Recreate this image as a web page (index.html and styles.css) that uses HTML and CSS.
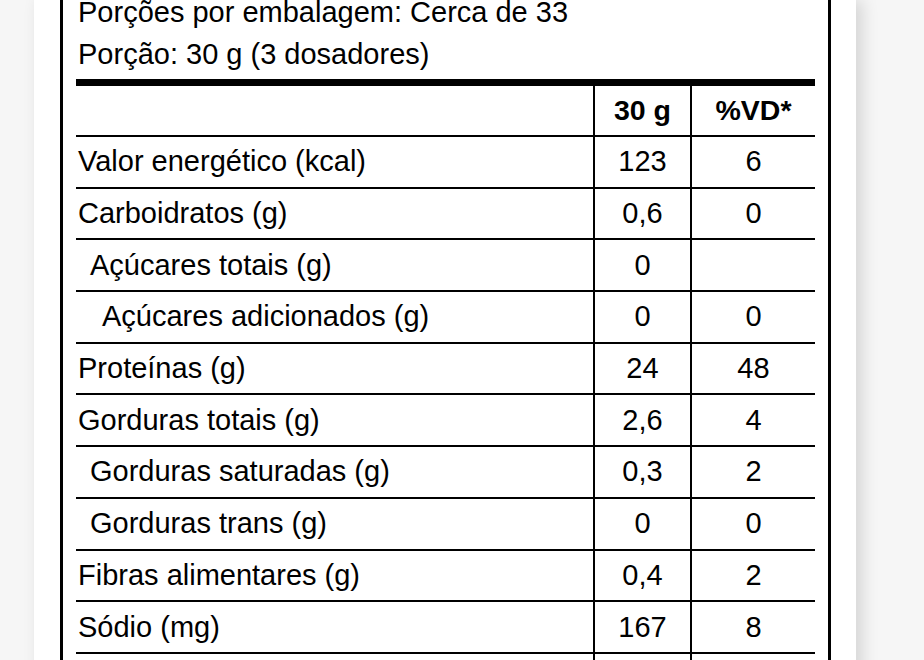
FILE: index.html
```html
<!DOCTYPE html>
<html lang="pt-BR">
<head>
<meta charset="utf-8">
<title>Informação Nutricional</title>
<link rel="stylesheet" href="styles.css">
</head>
<body>
<div class="page">
  <div class="label">
    <p class="info">Porções por embalagem: Cerca de 33</p>
    <p class="info">Porção: 30 g (3 dosadores)</p>
    <div class="thick-rule"></div>
    <table class="nutri">
      <thead>
        <tr>
          <th class="name"></th>
          <th class="val">30 g</th>
          <th class="vd">%VD*</th>
        </tr>
      </thead>
      <tbody>
        <tr><td class="name">Valor energético (kcal)</td><td class="val">123</td><td class="vd">6</td></tr>
        <tr><td class="name">Carboidratos (g)</td><td class="val">0,6</td><td class="vd">0</td></tr>
        <tr><td class="name sub">Açúcares totais (g)</td><td class="val">0</td><td class="vd"></td></tr>
        <tr><td class="name sub2">Açúcares adicionados (g)</td><td class="val">0</td><td class="vd">0</td></tr>
        <tr><td class="name">Proteínas (g)</td><td class="val">24</td><td class="vd">48</td></tr>
        <tr><td class="name">Gorduras totais (g)</td><td class="val">2,6</td><td class="vd">4</td></tr>
        <tr><td class="name sub">Gorduras saturadas (g)</td><td class="val">0,3</td><td class="vd">2</td></tr>
        <tr><td class="name sub">Gorduras trans (g)</td><td class="val">0</td><td class="vd">0</td></tr>
        <tr><td class="name">Fibras alimentares (g)</td><td class="val">0,4</td><td class="vd">2</td></tr>
        <tr><td class="name">Sódio (mg)</td><td class="val">167</td><td class="vd">8</td></tr>
        <tr><td class="name">&nbsp;</td><td class="val"></td><td class="vd"></td></tr>
      </tbody>
    </table>
  </div>
</div>
</body>
</html>
```

FILE: styles.css
```css
html, body {
  margin: 0;
  padding: 0;
  height: 100%;
  overflow: hidden;
}

body {
  background: #f6f6f6;
  font-family: "Liberation Sans", Arial, Helvetica, sans-serif;
  color: #000;
}

.page {
  margin-left: 34px;
  width: 822px;
  min-height: 100%;
  background: #fff;
  box-shadow: 6px 0 16px rgba(0, 0, 0, 0.14);
  overflow: hidden;
}

.label {
  margin-left: 26px;
  width: 739px;
  margin-top: -9px;
  padding: 0 13px 20px 13px;
  border-left: 3px solid #000;
  border-right: 3px solid #000;
}

.info {
  margin: 0;
  font-size: 29px;
  line-height: 42px;
  padding-left: 2px;
}

.thick-rule {
  margin-top: 4px;
  height: 7px;
  background: #000;
}

.nutri {
  width: 100%;
  border-collapse: collapse;
  table-layout: fixed;
  font-size: 29px;
}

.nutri th,
.nutri td {
  padding: 0;
  border-bottom: 2px solid #000;
  vertical-align: middle;
}

.nutri thead th {
  height: 49px;
  font-weight: bold;
  font-size: 28.5px;
}

.nutri tbody td {
  height: 49.7px;
}

.nutri .name {
  text-align: left;
  padding-left: 2px;
  width: auto;
}

.nutri .name.sub {
  padding-left: 14px;
}

.nutri .name.sub2 {
  padding-left: 26px;
}

.nutri .val {
  width: 95px;
  text-align: center;
  border-left: 2px solid #000;
}

.nutri .vd {
  width: 123px;
  text-align: center;
  border-left: 2px solid #000;
}
```
